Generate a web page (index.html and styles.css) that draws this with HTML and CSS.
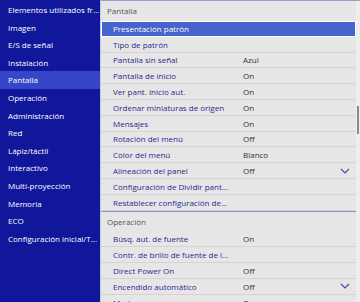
FILE: index.html
```html
<!DOCTYPE html>
<html>
<head>
    <title>Menú del proyector</title>
    <link rel="stylesheet" href="styles.css">
</head>
<body>
    <div class="screen">
        <!-- menú principal -->
        <ul class="side-menu">
            <li>Elementos utilizados fr...</li>
            <li>Imagen</li>
            <li>E/S de señal</li>
            <li>Instalación</li>
            <li class="active">Pantalla</li>
            <li>Operación</li>
            <li>Administración</li>
            <li>Red</li>
            <li>Lápiz/táctil</li>
            <li>Interactivo</li>
            <li>Multi-proyección</li>
            <li>Memoria</li>
            <li>ECO</li>
            <li>Configuración inicial/T...</li>
        </ul>

        <!-- submenú -->
        <div class="panel">
            <div class="section">
                <div class="section-title">Pantalla</div>
                <div class="row selected"><span class="label">Presentación patrón</span></div>
                <div class="row"><span class="label">Tipo de patrón</span></div>
                <div class="row"><span class="label">Pantalla sin señal</span><span class="value">Azul</span></div>
                <div class="row"><span class="label">Pantalla de inicio</span><span class="value">On</span></div>
                <div class="row"><span class="label">Ver pant. Inicio aut.</span><span class="value">On</span></div>
                <div class="row"><span class="label">Ordenar miniaturas de origen</span><span class="value">On</span></div>
                <div class="row"><span class="label">Mensajes</span><span class="value">On</span></div>
                <div class="row"><span class="label">Rotación del menú</span><span class="value">Off</span></div>
                <div class="row"><span class="label">Color del menú</span><span class="value">Blanco</span></div>
                <div class="row"><span class="label">Alineación del panel</span><span class="value">Off</span>
                    <svg class="chevron" width="10" height="6" viewBox="0 0 10 6"><path d="M1 1 L5 5 L9 1" fill="none" stroke="#4a4aa8" stroke-width="1.2"/></svg>
                </div>
                <div class="row"><span class="label">Configuración de Dividir pant...</span></div>
                <div class="row"><span class="label">Restablecer configuración de...</span></div>
            </div>
            <div class="section">
                <div class="section-title">Operación</div>
                <div class="row"><span class="label">Búsq. aut. de fuente</span><span class="value">On</span></div>
                <div class="row"><span class="label">Contr. de brillo de fuente de l...</span></div>
                <div class="row"><span class="label">Direct Power On</span><span class="value">Off</span></div>
                <div class="row"><span class="label">Encendido automático</span><span class="value">Off</span>
                    <svg class="chevron" width="10" height="6" viewBox="0 0 10 6"><path d="M1 1 L5 5 L9 1" fill="none" stroke="#4a4aa8" stroke-width="1.2"/></svg>
                </div>
                <div class="row"><span class="label">Modo</span><span class="value">On</span></div>
            </div>
            <div class="scrollbar"><div class="thumb"></div></div>
        </div>
    </div>
</body>
</html>
```

FILE: styles.css
```css
body {
    margin: 0;
    font-family: 'Open Sans', 'Noto Sans', sans-serif;
    font-size: 8px;
    background: #e6e6e6;
}

.screen {
    display: flex;
    width: 360px;
    height: 302px;
    overflow: hidden;
}

.side-menu {
    list-style: none;
    margin: 0;
    padding: 1px 0 0;
    width: 100px;
    flex-shrink: 0;
    background: #11179a;
    color: #ffffff;
}

.side-menu li {
    height: 17.6px;
    line-height: 17.6px;
    padding-left: 8px;
    white-space: nowrap;
}

.side-menu li.active {
    background: #3646c8;
}

.panel {
    position: relative;
    flex: 1;
    background: #e6e6e6;
    border-top: 1px solid #9c9cc8;
    border-left: 1px solid #c8c8d8;
    padding-right: 4px;
}

.section + .section {
    border-top: 1px solid #8e8ec8;
}

.section-title {
    height: 20px;
    line-height: 20px;
    padding-left: 6px;
    color: #555555;
}

.row {
    display: flex;
    align-items: center;
    height: 15.8px;
    box-sizing: border-box;
    border-bottom: 1px solid #d4d4d4;
    padding-left: 12px;
    color: #2a2a90;
}

.row .label {
    width: 130px;
    white-space: nowrap;
}

.row .value {
    color: #333333;
}

.row .chevron {
    margin-left: auto;
    margin-right: 6px;
}

.row.selected {
    background: #4763cc;
    color: #ffffff;
    border: 1px solid #ffffff;
    padding-left: 11px;
}

.scrollbar {
    position: absolute;
    top: 0;
    right: 0;
    width: 4px;
    height: 100%;
    background: #eeeeee;
}

.thumb {
    margin-top: 105px;
    margin-left: 1px;
    width: 2px;
    height: 28px;
    background: #8a8a8a;
}
```
